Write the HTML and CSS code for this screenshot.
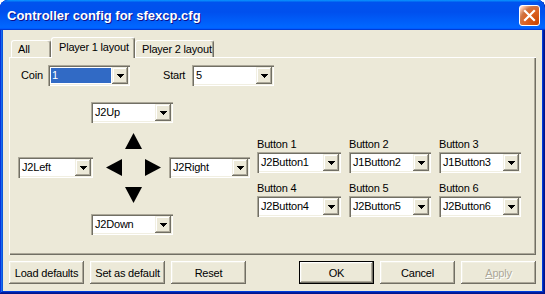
FILE: index.html
```html
<!DOCTYPE html>
<html>
    <head>
        <title>Controller config</title>
        <link rel="stylesheet" href="styles.css">
    </head>
    <body>
        <div class="window">
            <div class="titlebar">
                <span class="title">Controller config for sfexcp.cfg</span>
                <div class="close">
                    <svg width="13" height="13" viewBox="0 0 13 13">
                        <path d="M2 2 L11 11 M11 2 L2 11" stroke="#fff" stroke-width="2.2" stroke-linecap="square"/>
                    </svg>
                </div>
            </div>
            <div class="client">
                <div class="tabs">
                    <div class="tab tab-all">All</div>
                    <div class="tab tab-p1 active">Player 1 layout</div>
                    <div class="tab tab-p2">Player 2 layout</div>
                </div>
                <div class="panel">
                    <div class="row-top">
                        <span class="lbl lbl-coin">Coin</span>
                        <div class="combo w82">
                            <div class="value"><span class="hl">1</span></div>
                            <div class="drop"><svg width="7" height="4"><rect x="0" y="0" width="7" height="1"/><rect x="1" y="1" width="5" height="1"/><rect x="2" y="2" width="3" height="1"/><rect x="3" y="3" width="1" height="1"/></svg></div>
                        </div>
                        <span class="lbl lbl-start">Start</span>
                        <div class="combo w82">
                            <div class="value">5</div>
                            <div class="drop"><svg width="7" height="4"><rect x="0" y="0" width="7" height="1"/><rect x="1" y="1" width="5" height="1"/><rect x="2" y="2" width="3" height="1"/><rect x="3" y="3" width="1" height="1"/></svg></div>
                        </div>
                    </div>
                    <div class="lower">
                        <div class="dpad">
                            <div class="combo w82 d-up">
                                <div class="value">J2Up</div>
                                <div class="drop"><svg width="7" height="4"><rect x="0" y="0" width="7" height="1"/><rect x="1" y="1" width="5" height="1"/><rect x="2" y="2" width="3" height="1"/><rect x="3" y="3" width="1" height="1"/></svg></div>
                            </div>
                            <svg class="arrow a-up" width="17" height="17" viewBox="0 0 17 17"><polygon points="8.5,0 17,16 0,16"/></svg>
                            <div class="combo d-left">
                                <div class="value">J2Left</div>
                                <div class="drop"><svg width="7" height="4"><rect x="0" y="0" width="7" height="1"/><rect x="1" y="1" width="5" height="1"/><rect x="2" y="2" width="3" height="1"/><rect x="3" y="3" width="1" height="1"/></svg></div>
                            </div>
                            <svg class="arrow a-left" width="17" height="17" viewBox="0 0 17 17"><polygon points="0,8.5 16,0 16,17"/></svg>
                            <svg class="arrow a-right" width="17" height="17" viewBox="0 0 17 17"><polygon points="17,8.5 1,0 1,17"/></svg>
                            <div class="combo d-right">
                                <div class="value">J2Right</div>
                                <div class="drop"><svg width="7" height="4"><rect x="0" y="0" width="7" height="1"/><rect x="1" y="1" width="5" height="1"/><rect x="2" y="2" width="3" height="1"/><rect x="3" y="3" width="1" height="1"/></svg></div>
                            </div>
                            <svg class="arrow a-down" width="17" height="17" viewBox="0 0 17 17"><polygon points="0,0 17,0 8.5,16"/></svg>
                            <div class="combo w82 d-down">
                                <div class="value">J2Down</div>
                                <div class="drop"><svg width="7" height="4"><rect x="0" y="0" width="7" height="1"/><rect x="1" y="1" width="5" height="1"/><rect x="2" y="2" width="3" height="1"/><rect x="3" y="3" width="1" height="1"/></svg></div>
                            </div>
                        </div>
                        <div class="bgrid">
                            <div class="bcell">
                                <span class="lbl">Button 1</span>
                                <div class="combo w84">
                                    <div class="value">J2Button1</div>
                                    <div class="drop"><svg width="7" height="4"><rect x="0" y="0" width="7" height="1"/><rect x="1" y="1" width="5" height="1"/><rect x="2" y="2" width="3" height="1"/><rect x="3" y="3" width="1" height="1"/></svg></div>
                                </div>
                            </div>
                            <div class="bcell">
                                <span class="lbl">Button 2</span>
                                <div class="combo w82">
                                    <div class="value">J1Button2</div>
                                    <div class="drop"><svg width="7" height="4"><rect x="0" y="0" width="7" height="1"/><rect x="1" y="1" width="5" height="1"/><rect x="2" y="2" width="3" height="1"/><rect x="3" y="3" width="1" height="1"/></svg></div>
                                </div>
                            </div>
                            <div class="bcell">
                                <span class="lbl">Button 3</span>
                                <div class="combo w82">
                                    <div class="value">J1Button3</div>
                                    <div class="drop"><svg width="7" height="4"><rect x="0" y="0" width="7" height="1"/><rect x="1" y="1" width="5" height="1"/><rect x="2" y="2" width="3" height="1"/><rect x="3" y="3" width="1" height="1"/></svg></div>
                                </div>
                            </div>
                            <div class="bcell">
                                <span class="lbl">Button 4</span>
                                <div class="combo w84">
                                    <div class="value">J2Button4</div>
                                    <div class="drop"><svg width="7" height="4"><rect x="0" y="0" width="7" height="1"/><rect x="1" y="1" width="5" height="1"/><rect x="2" y="2" width="3" height="1"/><rect x="3" y="3" width="1" height="1"/></svg></div>
                                </div>
                            </div>
                            <div class="bcell">
                                <span class="lbl">Button 5</span>
                                <div class="combo w82">
                                    <div class="value">J2Button5</div>
                                    <div class="drop"><svg width="7" height="4"><rect x="0" y="0" width="7" height="1"/><rect x="1" y="1" width="5" height="1"/><rect x="2" y="2" width="3" height="1"/><rect x="3" y="3" width="1" height="1"/></svg></div>
                                </div>
                            </div>
                            <div class="bcell">
                                <span class="lbl">Button 6</span>
                                <div class="combo w82">
                                    <div class="value">J2Button6</div>
                                    <div class="drop"><svg width="7" height="4"><rect x="0" y="0" width="7" height="1"/><rect x="1" y="1" width="5" height="1"/><rect x="2" y="2" width="3" height="1"/><rect x="3" y="3" width="1" height="1"/></svg></div>
                                </div>
                            </div>
                        </div>
                    </div>
                </div>
                <div class="actions">
                    <div class="group">
                        <div class="btn">Load defaults</div>
                        <div class="btn">Set as default</div>
                        <div class="btn">Reset</div>
                    </div>
                    <div class="group">
                        <div class="btn default">OK</div>
                        <div class="btn">Cancel</div>
                        <div class="btn disabled"><u>A</u>pply</div>
                    </div>
                </div>
            </div>
        </div>
    </body>
</html>
```

FILE: styles.css
```css
body{
    margin: 0;
    background: #ffffff;
    font-family: "Liberation Sans", Arial, sans-serif;
    font-size: 11px;
    letter-spacing: -0.2px;
    color: #000000;
}
.window{
    width: 545px;
    height: 294px;
    box-sizing: border-box;
    display: flex;
    flex-direction: column;
    padding: 0 3px 3px;
    background: #0054e3;
    border-radius: 8px 8px 0 0;
    overflow: hidden;
    box-shadow: inset -1px -1px #00138c, inset 1px 1px #0831d9, inset -2px -2px #001ea0, inset 2px 2px #166aee, inset -3px -3px #003bda, inset 3px 3px #0855dd;
}
.titlebar{
    height: 30px;
    flex: none;
    margin: 0 -3px;
    padding: 1px 5px 0 7px;
    box-sizing: border-box;
    display: flex;
    align-items: center;
    justify-content: space-between;
    border-radius: 8px 8px 0 0;
    background: linear-gradient(180deg, #0997ff, #0053ee 8%, #0050ee 40%, #0066ff 88%, #0066ff 93%, #005bff 95%, #003dd7 96%, #003dd7);
}
.title{
    color: #ffffff;
    font-size: 13px;
    font-weight: bold;
    letter-spacing: 0;
    text-shadow: 1px 1px #0f1089;
    white-space: nowrap;
}
.close{
    width: 21px;
    height: 21px;
    box-sizing: border-box;
    border: 1px solid #ffffff;
    border-radius: 3px;
    display: flex;
    align-items: center;
    justify-content: center;
    background: radial-gradient(circle at 90% 90%, #cc4600 0, #dc6527 55%, #cd7546 70%, #ffccb2 90%, #ffffff 100%);
}
.client{
    flex: 1;
    background: #ece9d8;
    padding: 7px 6px 7px;
    display: flex;
    flex-direction: column;
}
.tabs{
    display: flex;
    align-items: flex-end;
    height: 20px;
    padding-left: 2px;
}
.tab{
    height: 17px;
    box-sizing: border-box;
    padding: 2px 0 0 6px;
    border-top: 1px solid #ffffff;
    border-left: 1px solid #ffffff;
    border-right: 1px solid #716f64;
    border-radius: 3px 3px 0 0;
    box-shadow: inset -1px 0 #aca899;
    line-height: 13px;
    white-space: nowrap;
    background: #ece9d8;
}
.tab-all{ width: 40px; }
.tab-p1{ width: 84px; }
.tab-p2{ width: 79px; }
.tab.active{
    height: 21px;
    margin-bottom: -1px;
    padding: 3px 0 0 7px;
    position: relative;
    z-index: 1;
}
.panel{
    height: 198px;
    box-sizing: border-box;
    padding: 8px 0 0 9px;
    box-shadow: inset 1px 1px #ffffff, inset -1px -1px #716f64, inset -2px -2px #aca899;
}
.row-top{
    display: flex;
    align-items: center;
    height: 21px;
}
.lbl{
    line-height: 13px;
    white-space: nowrap;
}
.lbl-coin{
    margin-left: 3px;
    width: 27px;
}
.lbl-start{
    margin-left: 33px;
    width: 29px;
}
.combo{
    height: 21px;
    box-sizing: border-box;
    padding: 2px;
    display: flex;
    background: #ffffff;
    box-shadow: inset 1px 1px #aca899, inset 2px 2px #716f64, inset -1px -1px #ffffff, inset -2px -2px #f1efe2;
}
.w82{ width: 82px; }
.w84{ width: 84px; }
.value{
    flex: 1;
    display: flex;
    padding-left: 2px;
    line-height: 17px;
    white-space: nowrap;
    overflow: hidden;
}
.value .hl{
    flex: 1;
    margin: 1px 1px 1px -1px;
    padding-left: 1px;
    line-height: 15px;
    background: #316ac5;
    color: #ffffff;
}
.drop{
    width: 16px;
    height: 17px;
    flex: none;
    display: flex;
    align-items: center;
    justify-content: center;
    background: #ece9d8;
    box-shadow: inset -1px -1px #716f64, inset 1px 1px #f1efe2, inset -2px -2px #aca899, inset 2px 2px #ffffff;
}
.drop svg{
    fill: #000000;
}
.lower{
    display: flex;
    align-items: flex-start;
    margin-top: 16px;
}
.dpad{
    display: grid;
    grid-template-columns: 75px 13px 19px 19px 19px 6px 81px;
    grid-template-rows: 21px 10px 17px 7px 21px 9px 17px 10px 21px;
}
.d-up{
    grid-column: 1 / -1;
    grid-row: 1;
    margin-left: 73px;
}
.d-left{
    grid-column: 1;
    grid-row: 5;
    width: 75px;
}
.d-right{
    grid-column: 7;
    grid-row: 5;
    width: 81px;
}
.d-down{
    grid-column: 1 / -1;
    grid-row: 9;
    margin-left: 73px;
}
.arrow{
    fill: #000000;
    align-self: center;
}
.a-up{ grid-column: 4; grid-row: 3; }
.a-left{ grid-column: 3; grid-row: 5; }
.a-right{ grid-column: 5; grid-row: 5; }
.a-down{ grid-column: 4; grid-row: 7; }
.bgrid{
    margin: 36px 0 0 7px;
    display: grid;
    grid-template-columns: 92px 90px 82px;
    row-gap: 9px;
}
.bcell{
    display: flex;
    flex-direction: column;
    gap: 1px;
}
.actions{
    display: flex;
    justify-content: space-between;
    margin-top: 6px;
}
.group{
    display: flex;
    gap: 6px;
}
.btn{
    width: 75px;
    height: 23px;
    box-sizing: border-box;
    display: flex;
    align-items: center;
    justify-content: center;
    background: #ece9d8;
    white-space: nowrap;
    box-shadow: inset -1px -1px #716f64, inset 1px 1px #ffffff, inset -2px -2px #aca899, inset 2px 2px #f1efe2;
}
.btn.default{
    border: 1px solid #000000;
}
.btn.disabled{
    color: #aca899;
    text-shadow: 1px 1px #ffffff;
}
```
